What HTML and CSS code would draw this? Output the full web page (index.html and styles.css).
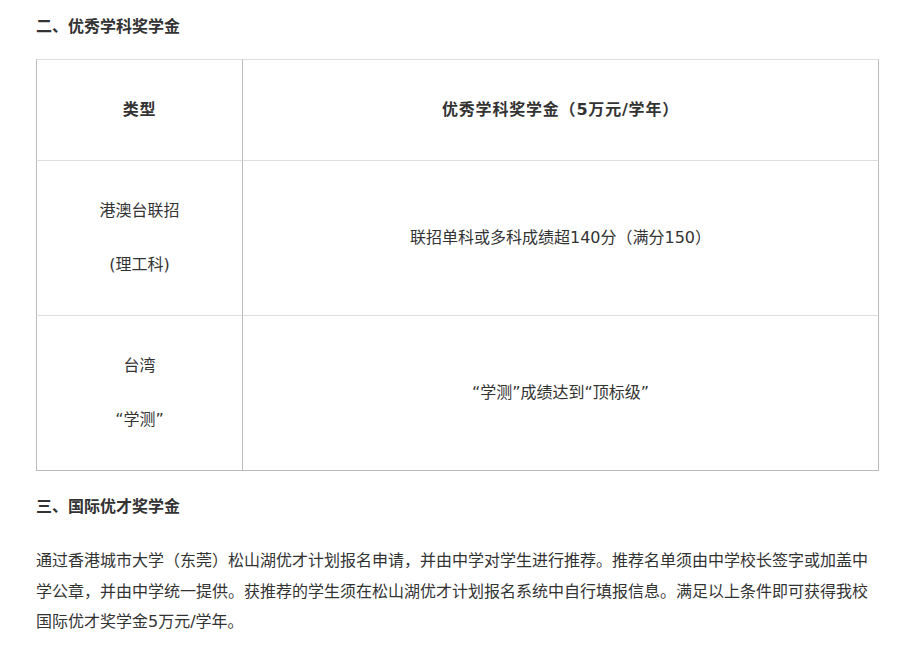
FILE: index.html
```html
<!DOCTYPE html>
<html lang="zh-CN">
<head>
    <meta charset="UTF-8">
    <meta name="viewport" content="width=device-width, initial-scale=1.0">
    <title>奖学金</title>
    <link rel="stylesheet" href="styles.css">
</head>
<body>
    <div class="article">
        <h3 class="section-title">二、优秀学科奖学金</h3>
        <table class="award-table">
            <tr class="head-row">
                <th class="type-col">类型</th>
                <th>优秀学科奖学金（5万元/学年）</th>
            </tr>
            <tr class="body-row">
                <td class="type-col">
                    <p>港澳台联招</p>
                    <p>(理工科)</p>
                </td>
                <td>联招单科或多科成绩超140分（满分150）</td>
            </tr>
            <tr class="body-row last-row">
                <td class="type-col">
                    <p>台湾</p>
                    <p>“学测”</p>
                </td>
                <td>“学测”成绩达到“顶标级”</td>
            </tr>
        </table>

        <h3 class="section-title second">三、国际优才奖学金</h3>
        <p class="section-text">通过香港城市大学（东莞）松山湖优才计划报名申请，并由中学对学生进行推荐。推荐名单须由中学校长签字或加盖中学公章，并由中学统一提供。获推荐的学生须在松山湖优才计划报名系统中自行填报信息。满足以上条件即可获得我校国际优才奖学金5万元/学年。</p>
    </div>
</body>
</html>
```

FILE: styles.css
```css
:root {
    --text-color: #333333;
    --line-light: #dddddd;
    --line-dark: #bbbbbb;
}

body {
    margin: 0;
    padding: 0;
    background: #ffffff;
    color: var(--text-color);
    font-family: 'DejaVu Sans', 'Noto Sans CJK SC', sans-serif;
    font-size: 16px;
}

.article {
    width: 843px;
    padding: 12px 0 0 36px;
}

.section-title {
    margin: 0;
    font-size: 16px;
    font-weight: bold;
    line-height: 30px;
}

.section-title.second {
    margin-top: 21px;
}

.award-table {
    width: 843px;
    margin-top: 17px;
    border-collapse: separate;
    border-spacing: 0;
    table-layout: fixed;
}

.award-table th,
.award-table td {
    box-sizing: border-box;
    padding: 0;
    text-align: center;
    vertical-align: middle;
    line-height: 30px;
    border-top: 1px solid var(--line-light);
    border-right: 1px solid var(--line-dark);
}

.award-table .type-col {
    width: 207px;
    border-left: 1px solid var(--line-dark);
}

.award-table th {
    font-weight: bold;
    letter-spacing: 0.8px;
}

.head-row th {
    height: 101px;
}

.body-row td {
    height: 155px;
}

.last-row td {
    height: 156px;
    border-bottom: 1px solid var(--line-dark);
}

.award-table p {
    margin: 0;
}

.award-table p + p {
    margin-top: 24px;
}

.section-text {
    margin: 24px 0 0;
    line-height: 30.5px;
}
```
